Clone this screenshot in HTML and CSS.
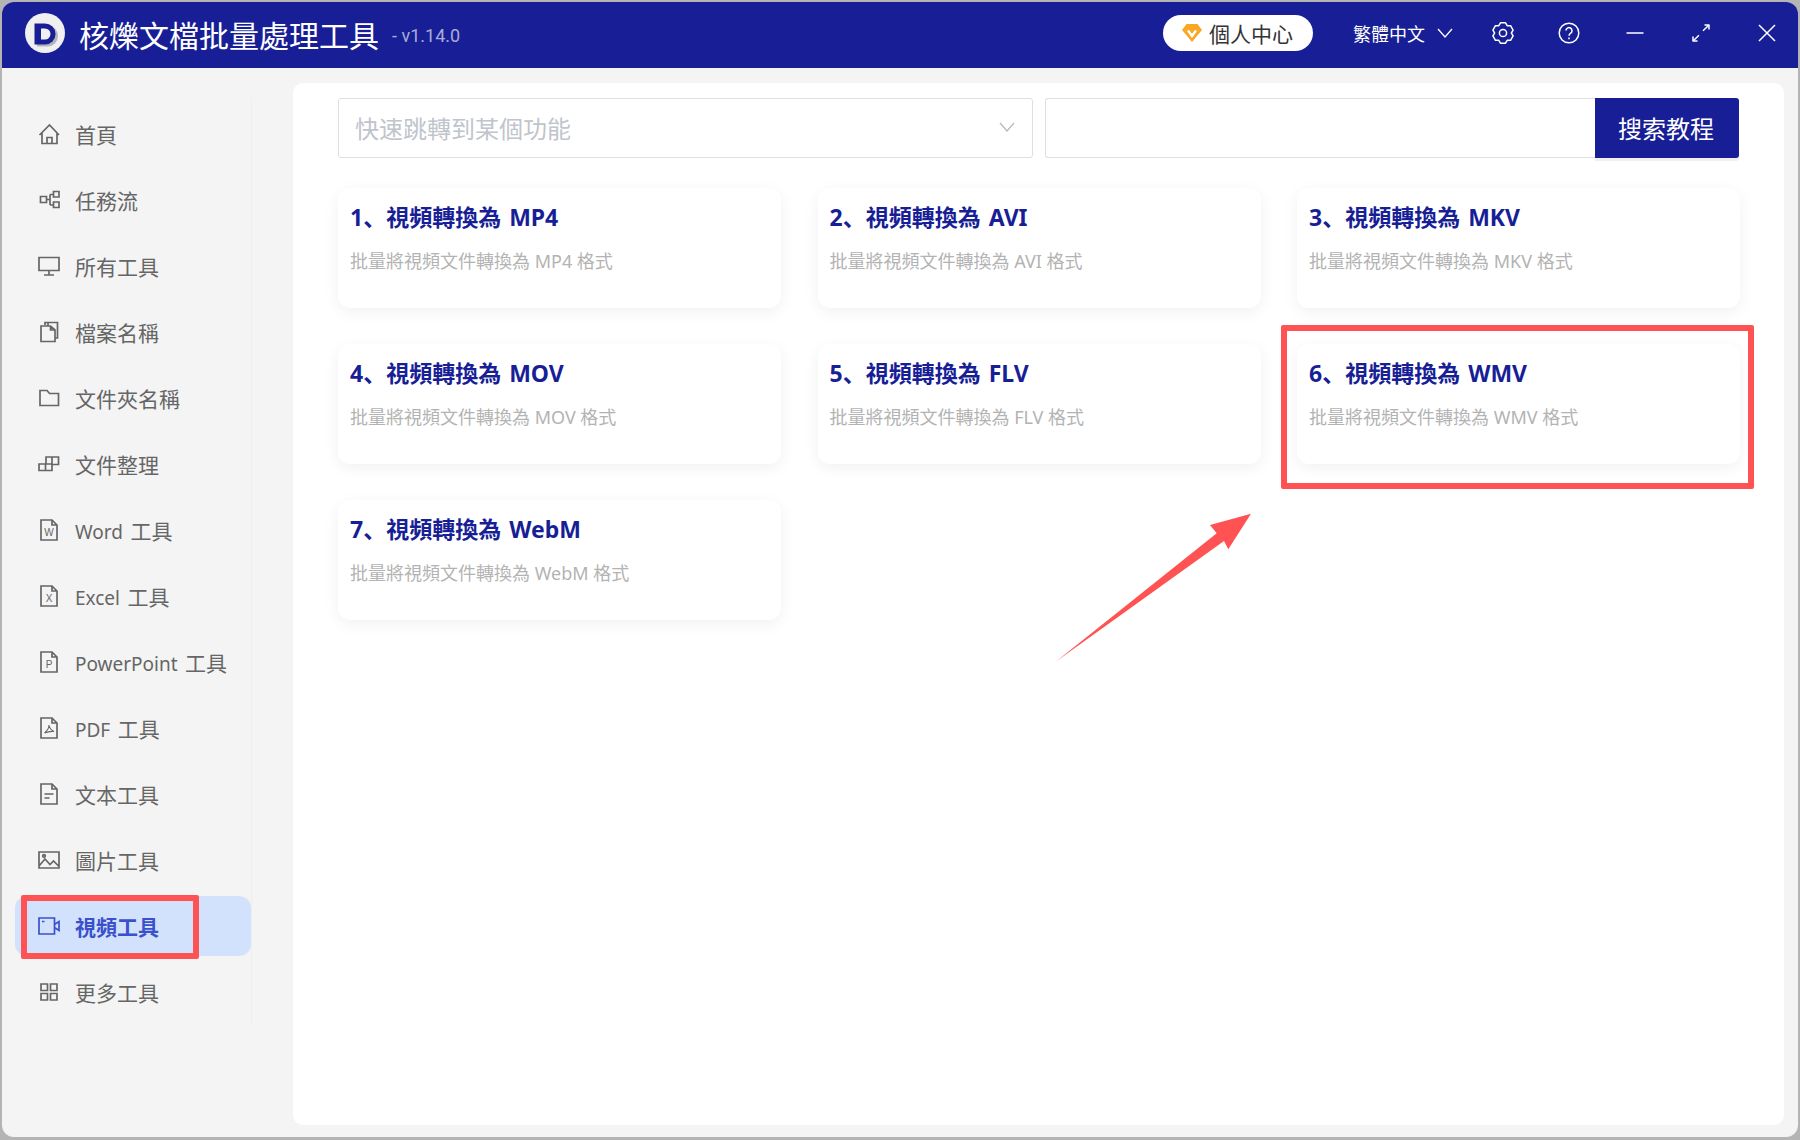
FILE: index.html
```html
<!DOCTYPE html>
<html>
<head>
  <meta charset="UTF-8">
  <title>核爍文檔批量處理工具</title>
  <link rel="stylesheet" href="styles.css">
</head>
<body>
  <div class="window">
    <header class="topbar">
      <svg class="logo" viewBox="0 0 40 40">
        <circle cx="20" cy="20" r="20" fill="#f0f0f0"/>
        <path d="M10 11h10.500a10.500 10.500 0 0 1 0 21H10z" fill="#b4b4be" transform="translate(2 1.500)"/>
        <path d="M9.500 10.500h10.500a10.500 10.500 0 0 1 0 21H9.500z" fill="#181f96"/>
        <path d="M16 15.500h4a5.300 5.300 0 0 1 0 11h-4z" fill="#f0f0f0"/>
      </svg>
      <span class="app-title">核爍文檔批量處理工具</span>
      <span class="version">- v1.14.0</span>

      <div class="user-pill">
        <svg class="gem" viewBox="0 0 20 18">
          <path d="M4.500 0h11L20 6 10 18 0 6z" fill="#f9a825"/>
          <path d="M6 6.500l4 5.500 4-5.500" fill="none" stroke="#fff" stroke-width="2.400"/>
        </svg>
        <span>個人中心</span>
      </div>

      <div class="lang">
        <span>繁體中文</span>
        <svg class="lang-arrow" viewBox="0 0 16 10"><path d="M1 1l7 8 7-8"/></svg>
      </div>

      <div class="win-btns">
        <svg class="win-icon" viewBox="0 0 22 22">
          <path d="M8.460 .810H13.540L15.200 3.730L18.550 3.700L21.090 8.100L19.400 11L21.090 13.900L18.550 18.300L15.200 18.270L13.540 21.190H8.460L6.800 18.270L3.450 18.300L.910 13.900L2.600 11L.910 8.100L3.450 3.700L6.800 3.730z"/>
          <circle cx="11" cy="11" r="3.600"/>
        </svg>
        <svg class="win-icon" viewBox="0 0 22 22">
          <circle cx="11" cy="11" r="9.800"/>
          <path d="M8 8.600a3 3 0 1 1 4.700 2.500c-1.100.7-1.700 1.300-1.700 2.600"/>
          <path d="M11 15.600v1.600"/>
        </svg>
        <svg class="win-icon" viewBox="0 0 22 22"><path d="M2.500 11h17"/></svg>
        <svg class="win-icon" viewBox="0 0 22 22">
          <path d="M13 8.800L18.500 3.500M3.500 18.500L9 13.200"/>
          <path d="M14.500 3h4.500v4.500M3 14.500V19h4.500" />
        </svg>
        <svg class="win-icon" viewBox="0 0 22 22"><path d="M3 3l16 16M19 3L3 19"/></svg>
      </div>
    </header>

    <div class="content">
      <nav class="sidebar">
        <a class="nav-item">
          <svg class="nav-icon" viewBox="0 0 22 22"><path d="M1.500 12L11.500 2l9.500 10M4 10v10.500h15V10M9 20.500V14.500h5v6"/></svg>
          <span>首頁</span>
        </a>
        <a class="nav-item">
          <svg class="nav-icon" viewBox="0 0 22 22"><path d="M2.500 7.500h6v6h-6zM15.500 2.500h5.500V8h-5.500zM15.500 13H21v5.500h-5.500zM8.500 10.500H12M12 5.500v10.500M12 5.500h3.500M12 16h3.500"/></svg>
          <span>任務流</span>
        </a>
        <a class="nav-item">
          <svg class="nav-icon" viewBox="0 0 22 22"><path d="M1 2.500h20v13H1zM11 15.500V20M6 20h10"/></svg>
          <span>所有工具</span>
        </a>
        <a class="nav-item">
          <svg class="nav-icon" viewBox="0 0 22 22"><path d="M7 4V1.500h12.500V17H17M3 5h9.500L17 9v11.500H3zM12.500 5v4H17M10 1.500v3"/></svg>
          <span>檔案名稱</span>
        </a>
        <a class="nav-item">
          <svg class="nav-icon" viewBox="0 0 22 22"><path d="M2 3.500h7l2.500 3H20.500v12H2z"/></svg>
          <span>文件夾名稱</span>
        </a>
        <a class="nav-item">
          <svg class="nav-icon" viewBox="0 0 22 22"><path d="M1 11h13v6.500H1zM7.500 11v6.500M8 11V4h12.500v7.500H14M14 4v7"/></svg>
          <span>文件整理</span>
        </a>
        <a class="nav-item">
          <svg class="nav-icon" viewBox="0 0 22 22"><path d="M3 1h11l5 5v15H3zM14 1v5h5"/><text class="doc-mark" x="11" y="17">W</text></svg>
          <span><span class="latin">Word</span> 工具</span>
        </a>
        <a class="nav-item">
          <svg class="nav-icon" viewBox="0 0 22 22"><path d="M3 1h11l5 5v15H3zM14 1v5h5"/><text class="doc-mark" x="11" y="17">X</text></svg>
          <span><span class="latin">Excel</span> 工具</span>
        </a>
        <a class="nav-item">
          <svg class="nav-icon" viewBox="0 0 22 22"><path d="M3 1h11l5 5v15H3zM14 1v5h5"/><text class="doc-mark" x="11" y="17">P</text></svg>
          <span><span class="latin">PowerPoint</span> 工具</span>
        </a>
        <a class="nav-item">
          <svg class="nav-icon" viewBox="0 0 22 22"><path d="M3 1h11l5 5v15H3zM14 1v5h5"/><path class="thin" d="M11 8c0 3-2 6-4.500 8M11 8c.5 3 2.500 5.500 5 6.500-3-.3-6.500.3-9.500 1.500"/></svg>
          <span><span class="latin">PDF</span> 工具</span>
        </a>
        <a class="nav-item">
          <svg class="nav-icon" viewBox="0 0 22 22"><path d="M3 1h11l5 5v15H3zM14 1v5h5M6.500 11h9M6.500 15h5"/></svg>
          <span>文本工具</span>
        </a>
        <a class="nav-item">
          <svg class="nav-icon" viewBox="0 0 22 22"><path d="M1 3h20v16H1zM1 17l6-7 5 5.500 3.500-3.500 5.500 5.500"/><circle cx="6" cy="7" r="1.300"/></svg>
          <span>圖片工具</span>
        </a>
        <a class="nav-item active">
          <svg class="nav-icon" viewBox="0 0 22 22"><path d="M1 3h15.500v16H1zM16.500 9.500l4.500-3v9l-4.500-3M4 6.500h2.500"/></svg>
          <span>視頻工具</span>
        </a>
        <a class="nav-item">
          <svg class="nav-icon" viewBox="0 0 22 22"><path d="M3 3h6.500v6.500H3zM12.500 3H19v6.500h-6.500zM3 12.500h6.500V19H3zM12.500 12.500H19V19h-6.500z"/></svg>
          <span>更多工具</span>
        </a>
      </nav>

      <main class="panel">
        <div class="search-row">
          <div class="jump-select">
            <span>快速跳轉到某個功能</span>
            <svg class="select-arrow" viewBox="0 0 16 10"><path d="M1 1l7 8 7-8"/></svg>
          </div>
          <div class="search-box">
            <input class="search-input" type="text">
            <button class="search-btn" type="button">搜索教程</button>
          </div>
        </div>

        <div class="card-grid">
          <div class="card">
            <h3>1、視頻轉換為 MP4</h3>
            <p>批量將視頻文件轉換為 MP4 格式</p>
          </div>
          <div class="card">
            <h3>2、視頻轉換為 AVI</h3>
            <p>批量將視頻文件轉換為 AVI 格式</p>
          </div>
          <div class="card">
            <h3>3、視頻轉換為 MKV</h3>
            <p>批量將視頻文件轉換為 MKV 格式</p>
          </div>
          <div class="card">
            <h3>4、視頻轉換為 MOV</h3>
            <p>批量將視頻文件轉換為 MOV 格式</p>
          </div>
          <div class="card">
            <h3>5、視頻轉換為 FLV</h3>
            <p>批量將視頻文件轉換為 FLV 格式</p>
          </div>
          <div class="card">
            <h3>6、視頻轉換為 WMV</h3>
            <p>批量將視頻文件轉換為 WMV 格式</p>
          </div>
          <div class="card">
            <h3>7、視頻轉換為 WebM</h3>
            <p>批量將視頻文件轉換為 WebM 格式</p>
          </div>
        </div>
      </main>
    </div>
  </div>

  <!-- red markup drawn on top of the screenshot -->
  <div class="mark mark-nav"></div>
  <div class="mark mark-card"></div>
  <svg class="mark-arrow" viewBox="0 0 200 155">
    <path d="M1 149.500L161.700 21.300L155 13L196 1.700L173.300 37.300L169 29z" fill="#ff5353"/>
  </svg>
</body>
</html>
```

FILE: styles.css
```css
* {
  box-sizing: border-box;
}

html, body {
  height: 100%;
}

body {
  margin: 0;
  background: #b4b4b4;
  overflow: hidden;
  font-family: "Noto Sans", "Noto Sans CJK SC", sans-serif;
  color: #666;
}

.window {
  position: absolute;
  top: 2px;
  left: 2px;
  width: 1796px;
  height: 1135px;
  display: flex;
  flex-direction: column;
  background: #f4f4f4;
  border-radius: 12px;
  overflow: hidden;
}

/* top bar */
.topbar {
  height: 66px;
  flex: none;
  display: flex;
  align-items: center;
  padding: 0 20px 0 23px;
  background: #181f96;
  color: #fff;
}

.logo {
  width: 40px;
  height: 40px;
  flex: none;
  margin-top: -4px;
}

.app-title {
  margin-left: 14px;
  margin-top: 1px;
  font-size: 30px;
  line-height: 40px;
  white-space: nowrap;
}

.version {
  margin-left: 13px;
  font-size: 18px;
  color: #a9acd8;
  font-family: Roboto, sans-serif;
}

.user-pill {
  margin-left: auto;
  width: 150px;
  height: 36px;
  margin-top: -4px;
  display: flex;
  align-items: center;
  gap: 7px;
  padding-left: 19px;
  background: #fff;
  border-radius: 18px;
  color: #333;
  font-size: 21px;
}

.gem {
  width: 20px;
  height: 18px;
  flex: none;
}

.lang {
  margin-left: 40px;
  margin-top: -4px;
  display: flex;
  align-items: center;
  gap: 12px;
  font-size: 18px;
}

.lang-arrow {
  width: 16px;
  height: 10px;
  fill: none;
  stroke: #fff;
  stroke-width: 1.300;
}

.win-btns {
  margin-left: 39px;
  margin-top: -4px;
  display: flex;
  gap: 44px;
}

.win-icon {
  width: 22px;
  height: 22px;
  fill: none;
  stroke: #fff;
  stroke-width: 1.500;
  stroke-linejoin: round;
}

/* sidebar + panel */
.content {
  flex: 1;
  display: flex;
  min-height: 0;
}

.sidebar {
  width: 250px;
  height: 927px;
  margin-top: 30px;
  flex: none;
  display: flex;
  flex-direction: column;
  gap: 6px;
  padding: 6px 0 0 13px;
  border-right: 1px solid #eeeeee;
}

.nav-item {
  height: 60px;
  flex: none;
  display: flex;
  align-items: center;
  gap: 15px;
  padding-left: 23px;
  border-radius: 12px;
  font-size: 21px;
  white-space: nowrap;
}

.latin {
  font-size: 19px;
  margin-right: 2px;
}

.nav-icon {
  width: 22px;
  height: 22px;
  flex: none;
  fill: none;
  stroke: #666;
  stroke-width: 1.700;
}

.nav-icon .thin {
  stroke-width: 1.100;
}

.doc-mark {
  fill: #666;
  stroke: none;
  font-family: "Liberation Sans", sans-serif;
  font-size: 10px;
  text-anchor: middle;
}

.nav-item.active {
  background: #d2e2fc;
  color: #3a50cc;
  font-weight: 700;
}

.nav-item.active .nav-icon {
  stroke: #3a50cc;
}

.panel {
  flex: 1;
  margin: 15px 14px 12px 41px;
  padding: 15px 45px 0;
  background: #fff;
  border-radius: 10px;
}

.search-row {
  display: flex;
  gap: 12px;
  height: 60px;
  margin-bottom: 30px;
}

.jump-select {
  width: 695px;
  flex: none;
  display: flex;
  align-items: center;
  justify-content: space-between;
  padding: 0 17px 2px 16px;
  border: 1px solid #dcdfe6;
  border-radius: 3px;
  font-size: 24px;
  color: #c0c4cc;
}

.select-arrow {
  width: 16px;
  height: 10px;
  fill: none;
  stroke: #b5b8c0;
  stroke-width: 1.300;
}

.search-box {
  flex: 1;
  display: flex;
}

.search-input {
  flex: 1;
  min-width: 0;
  border: 1px solid #dcdfe6;
  border-right: none;
  border-radius: 3px 0 0 3px;
  outline: none;
}

.search-btn {
  width: 144px;
  border: none;
  border-radius: 0 3px 3px 0;
  background: #181f96;
  color: #fff;
  font-family: inherit;
  font-size: 24px;
  padding: 0 2px 2px 0;
  box-shadow: 0 3px 0 #f0f0f0;
}

.card-grid {
  display: grid;
  grid-template-columns: repeat(3, 443px);
  justify-content: space-between;
  row-gap: 36px;
  margin-right: -1px;
}

.card {
  height: 120px;
  padding: 11px 12px;
  border-radius: 12px;
  box-shadow: 0 4px 16px rgba(0, 0, 0, 0.06);
}

.card h3 {
  margin: 0;
  font-size: 23px;
  line-height: 36px;
  font-weight: 700;
  color: #181f96;
  word-spacing: 2px;
}

.card p {
  margin: 13px 0 0;
  font-size: 18px;
  line-height: 26px;
  color: #b3b3b3;
}

/* markup */
.mark {
  position: absolute;
  border: 6px solid #ff5353;
  border-radius: 2px;
}

.mark-nav {
  left: 21px;
  top: 895px;
  width: 178px;
  height: 64px;
}

.mark-card {
  left: 1281px;
  top: 325px;
  width: 473px;
  height: 164px;
}

.mark-arrow {
  position: absolute;
  left: 1055px;
  top: 512px;
  width: 200px;
  height: 155px;
}
```
